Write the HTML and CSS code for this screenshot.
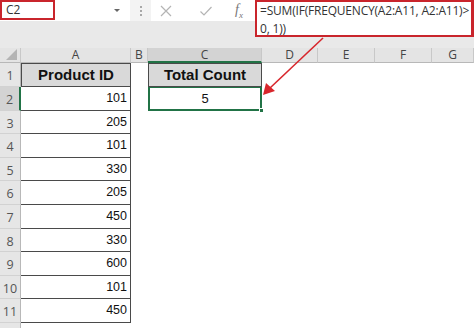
FILE: index.html
```html
<!DOCTYPE html>
<html lang="en">
<head>
    <meta charset="UTF-8">
    <title>Sheet</title>
    <link rel="stylesheet" href="styles.css">
</head>
<body>

    <div class="topbar">
        <div class="namebox">
            <span class="name-ref">C2</span>
            <span class="name-drop"></span>
        </div>
        <div class="bar-sep"><span></span><span></span><span></span></div>
        <div class="fx-buttons">
            <svg width="14" height="14" viewBox="0 0 14 14"><path d="M2 2 L12 12 M12 2 L2 12" stroke="#b4b4b4" stroke-width="1.2" fill="none"/></svg>
            <svg width="14" height="14" viewBox="0 0 14 14"><path d="M1.5 7.5 L5 11 L12.5 3" stroke="#b4b4b4" stroke-width="1.2" fill="none"/></svg>
            <span class="fx">f<sub>x</sub></span>
        </div>
        <div class="formula">=SUM(IF(FREQUENCY(A2:A11, A2:A11)&gt;<br>0, 1))</div>
    </div>

    <div class="sheet">
        <div class="corner"><span></span></div>
        <div class="colhead">A</div>
        <div class="colhead">B</div>
        <div class="colhead active">C</div>
        <div class="colhead">D</div>
        <div class="colhead">E</div>
        <div class="colhead">F</div>
        <div class="colhead">G</div>

        <div class="rowhead">1</div>
        <div class="cell title">Product ID</div>
        <div class="cell"></div>
        <div class="cell title count">Total Count</div>
        <div class="cell"></div><div class="cell"></div><div class="cell"></div><div class="cell"></div>

        <div class="rowhead active">2</div>
        <div class="cell num">101</div>
        <div class="cell"></div>
        <div class="cell result">5<span class="handle"></span></div>
        <div class="cell"></div><div class="cell"></div><div class="cell"></div><div class="cell"></div>

        <div class="rowhead">3</div>
        <div class="cell num">205</div>
        <div class="cell"></div><div class="cell"></div><div class="cell"></div><div class="cell"></div><div class="cell"></div><div class="cell"></div>

        <div class="rowhead">4</div>
        <div class="cell num">101</div>
        <div class="cell"></div><div class="cell"></div><div class="cell"></div><div class="cell"></div><div class="cell"></div><div class="cell"></div>

        <div class="rowhead">5</div>
        <div class="cell num">330</div>
        <div class="cell"></div><div class="cell"></div><div class="cell"></div><div class="cell"></div><div class="cell"></div><div class="cell"></div>

        <div class="rowhead">6</div>
        <div class="cell num">205</div>
        <div class="cell"></div><div class="cell"></div><div class="cell"></div><div class="cell"></div><div class="cell"></div><div class="cell"></div>

        <div class="rowhead">7</div>
        <div class="cell num">450</div>
        <div class="cell"></div><div class="cell"></div><div class="cell"></div><div class="cell"></div><div class="cell"></div><div class="cell"></div>

        <div class="rowhead">8</div>
        <div class="cell num">330</div>
        <div class="cell"></div><div class="cell"></div><div class="cell"></div><div class="cell"></div><div class="cell"></div><div class="cell"></div>

        <div class="rowhead">9</div>
        <div class="cell num">600</div>
        <div class="cell"></div><div class="cell"></div><div class="cell"></div><div class="cell"></div><div class="cell"></div><div class="cell"></div>

        <div class="rowhead">10</div>
        <div class="cell num">101</div>
        <div class="cell"></div><div class="cell"></div><div class="cell"></div><div class="cell"></div><div class="cell"></div><div class="cell"></div>

        <div class="rowhead">11</div>
        <div class="cell num">450</div>
        <div class="cell"></div><div class="cell"></div><div class="cell"></div><div class="cell"></div><div class="cell"></div><div class="cell"></div>

        <div class="rowhead tail"></div>

        <svg class="arrow" width="474" height="328" viewBox="0 0 474 328">
            <line x1="323" y1="38" x2="270" y2="88" stroke="#d8262c" stroke-width="1.6"/>
            <polygon points="263,95 266,83 275,91" fill="#d8262c"/>
        </svg>
    </div>

</body>
</html>
```

FILE: styles.css
```css
*
{
    margin: 0;
    padding: 0;
    box-sizing: border-box;
}

html
{
    overflow: hidden;
}

body
{
    width: 474px;
    height: 328px;
    overflow: hidden;
    background: #ffffff;
    font-family: "Open Sans", "Noto Sans", sans-serif;
    color: #333;
}

/* formula bar */

.topbar
{
    display: flex;
    align-items: flex-start;
    height: 48px;
    background: #e9e9e9;
}

.namebox
{
    position: relative;
    width: 130px;
    height: 21px;
    background: #fff;
}

.name-ref
{
    display: block;
    width: 55px;
    height: 20px;
    border: 2px solid #c9252c;
    padding-left: 4px;
    font-size: 12px;
    line-height: 16px;
    color: #333;
}

.name-drop
{
    position: absolute;
    right: 10px;
    top: 9px;
    border-left: 3px solid transparent;
    border-right: 3px solid transparent;
    border-top: 3px solid #666;
}

.bar-sep
{
    width: 21px;
    height: 21px;
    background: #f3f3f3;
    display: flex;
    flex-direction: column;
    align-items: center;
    justify-content: center;
    gap: 2px;
}

.bar-sep span
{
    width: 2px;
    height: 2px;
    background: #a8a8a8;
}

.fx-buttons
{
    width: 104px;
    height: 21px;
    background: #fff;
    display: flex;
    align-items: center;
    padding-left: 8px;
    gap: 26px;
}

.fx
{
    font-family: "Liberation Serif", serif;
    font-style: italic;
    font-size: 14px;
    color: #777;
    margin-left: -4px;
}

.fx sub
{
    font-size: 9px;
}

.formula
{
    flex: 1;
    height: 37px;
    background: #fff;
    border: 2px solid #c9252c;
    border-right-width: 3px;
    padding: 0 0 0 3px;
    font-size: 12px;
    line-height: 18px;
    letter-spacing: -0.2px;
    color: #333;
    white-space: nowrap;
    overflow: hidden;
}

/* sheet grid */

.sheet
{
    position: relative;
    display: grid;
    grid-template-columns: 21px 110px 17px 114px 56px 57px 57px 1fr;
    grid-template-rows: 15px 24px;
    grid-auto-rows: 23.6px;
}

.corner
{
    background: #e4e4e4;
    border-right: 1px solid #c8c8c8;
    border-bottom: 1px solid #b8b8b8;
    position: relative;
}

.corner span
{
    position: absolute;
    right: 3px;
    bottom: 2px;
    width: 0;
    height: 0;
    border-left: 11px solid transparent;
    border-bottom: 11px solid #b4b4b4;
}

.colhead
{
    background: #e4e4e4;
    border-right: 1px solid #c8c8c8;
    border-bottom: 1px solid #b8b8b8;
    text-align: center;
    font-size: 12px;
    line-height: 14px;
    color: #444;
}

.colhead.active
{
    background: #d3d3d3;
    border-bottom: 2px solid #217346;
}

.rowhead
{
    background: #e6e6e6;
    border-right: 1px solid #b8b8b8;
    border-bottom: 1px solid #d2d2d2;
    font-size: 12.5px;
    line-height: 22px;
    padding-top: 2px;
    text-align: center;
    color: #555;
}

.rowhead.active
{
    background: #d3d3d3;
    border-right: 2px solid #217346;
}

.cell
{
    font-family: "Liberation Sans", Arial, sans-serif;
    font-size: 12.5px;
    color: #111;
}

.title
{
    background: #d9d9d9;
    border: 1px solid #4a4a4a;
    font-weight: bold;
    font-size: 15px;
    text-align: center;
    line-height: 22px;
}

.num
{
    border-right: 1px solid #4a4a4a;
    border-bottom: 1px solid #4a4a4a;
    text-align: right;
    padding-right: 3px;
    line-height: 23px;
}

.result
{
    position: relative;
    border: 2px solid #217346;
    border-top-width: 1px;
    text-align: center;
    font-size: 13px;
    line-height: 21px;
}

.handle
{
    position: absolute;
    right: -4px;
    bottom: -4px;
    width: 5px;
    height: 5px;
    background: #217346;
    border: 1px solid #fff;
}

.arrow
{
    position: absolute;
    left: 0;
    top: -48px;
    pointer-events: none;
}
```
